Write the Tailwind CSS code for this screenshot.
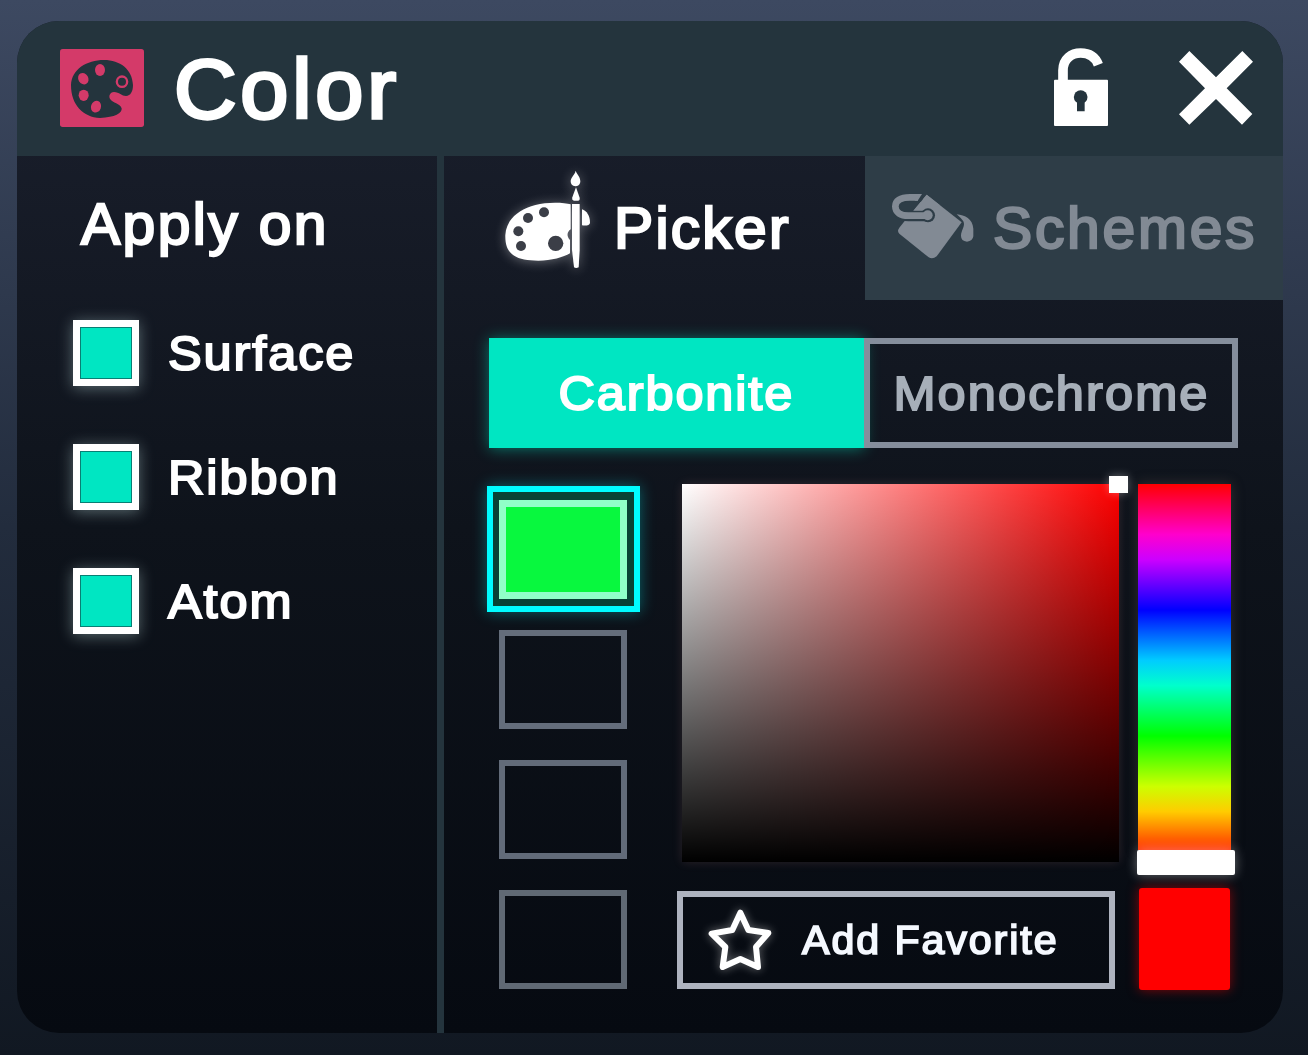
<!DOCTYPE html>
<html lang="en">
<head>
<meta charset="utf-8">
<title>Color</title>
<script src="https://cdn.jsdelivr.net/npm/@tailwindcss/browser@4"></script>
</head>
<body class="h-[1055px] w-[1308px] overflow-hidden bg-linear-to-b/srgb from-[#3d4961] via-[#222c3d] to-[#111822] pt-[21px] pl-[17px] font-['Liberation_Sans',sans-serif] text-white [font-kerning:none]">
<main class="flex h-[1012px] w-[1266px] flex-col overflow-hidden rounded-[42px] bg-linear-to-b/srgb from-[#1b202e] via-[#0e131b] to-[#060a11]">
  <header class="flex h-[135px] shrink-0 items-center bg-[#24343d] pb-[2px] pl-[43px]">
    <svg class="h-[78px] w-[84px] shrink-0" viewBox="60 57 252 234">
      <rect x="60" y="57" width="252" height="234" rx="8" fill="#d43a69"/>
      <path fill="#24343d" d="M93 165C95 118 140 90 192 90C240 90 277 118 279 165C279 185 272 197 258 198C245 198 238 186 222 186C209 187 205 199 211 208C218 219 240 220 245 235C247 250 225 262 180 264C130 262 93 225 93 165Z"/>
      <g fill="#d43a69"><ellipse cx="180" cy="120" rx="15" ry="18"/><ellipse cx="130" cy="146" rx="15" ry="18" transform="rotate(-30 130 146)"/><ellipse cx="131" cy="196" rx="15" ry="17"/><ellipse cx="168" cy="230" rx="15" ry="18" transform="rotate(20 168 230)"/></g>
      <circle cx="246" cy="155" r="15.500" fill="none" stroke="#d43a69" stroke-width="7"/>
    </svg>
    <h1 class="ml-[30px] flex-1 pt-[2px] text-[84px] leading-none"><span class="inline-block origin-left scale-x-103 tracking-[3.700px] [-webkit-text-stroke:3.3px_white]">Color</span></h1>
    <svg class="relative -top-px h-[80px] w-[58px]" viewBox="66 80 174 240">
      <path fill="none" stroke="#fff" stroke-width="29" d="M99 184V150C99 115 125 98 152 98C178 98 196 110 205 133"/>
      <rect x="72" y="178" width="162" height="139" rx="3" fill="#fff"/>
      <circle cx="152" cy="230" r="20.500" fill="#24343d"/><path fill="#24343d" d="M141 240h23v33h-23z"/>
    </svg>
    <svg class="mr-[30px] ml-[69px] h-[74px] w-[74px]" viewBox="447 93 222 222"><path fill="#fff" d="M447 125 478 93 558 172 637 93 669 125 590 205 667 282 636 314 558 237 478 314 447 283 525 205Z"/></svg>
  </header>
  <div class="flex flex-1">
    <aside class="w-[420px] shrink-0 pt-[34px]">
      <h2 class="ml-[64px] h-[68px] text-[57px] leading-[68px]"><span class="inline-block origin-left scale-x-103 tracking-[2.350px] [-webkit-text-stroke:2.3px_white]">Apply on</span></h2>
      <ul class="mt-[62px] ml-[56px] flex flex-col gap-[58px] text-[49px] leading-none tracking-[1.850px] [-webkit-text-stroke:2px_white]">
        <li class="flex h-[66px] items-center gap-[29px]"><span class="size-[66px] border-7 border-white bg-[#00e6c2] shadow-[0_2px_14px_rgba(200,235,235,0.4),inset_0_0_0_1px_#087f74]"></span><span class="origin-left scale-x-103">Surface</span></li>
        <li class="flex h-[66px] items-center gap-[29px]"><span class="size-[66px] border-7 border-white bg-[#00e6c2] shadow-[0_2px_14px_rgba(200,235,235,0.4),inset_0_0_0_1px_#087f74]"></span><span class="origin-left scale-x-103">Ribbon</span></li>
        <li class="flex h-[66px] items-center gap-[29px]"><span class="size-[66px] border-7 border-white bg-[#00e6c2] shadow-[0_2px_14px_rgba(200,235,235,0.4),inset_0_0_0_1px_#087f74]"></span><span class="origin-left scale-x-103">Atom</span></li>
      </ul>
    </aside>
    <div class="w-[7px] shrink-0 bg-[#24343d]"></div>
    <section class="flex w-[839px] flex-col">
      <nav class="flex h-[144px] shrink-0 text-[57px] leading-none">
        <div class="flex w-[421px] items-center pl-[56px] tracking-[2.200px] [-webkit-text-stroke:2.3px_white]">
          <svg class="relative -top-2 h-[104px] w-[94px] shrink-0 overflow-visible drop-shadow-[0_1px_6px_rgba(255,255,255,0.35)]" viewBox="60 24 282 312">
            <g fill="#fff"><path d="M76 225C80 165 140 128 225 128C245 128 262 130 272 133V208C262 215 258 228 270 240V280C250 292 215 302 175 302C110 302 74 285 76 225Z"/>
            <path d="M306 148C320 152 330 168 330 188C330 196 318 198 306 196Z"/>
            <path d="M276 132H299V270L296 322Q288 326 282 322L276 270Z"/>
            <path d="M288 82 299 113Q300 122 294 122H282Q275 122 277 112Z"/>
            <path d="M287 32C291 45 302 50 301 66Q298 79 286 79Q272 78 272 64C272 52 284 46 287 32Z"/></g>
            <g fill="#3b3e47"><circle cx="144" cy="174" r="15"/><circle cx="192" cy="157" r="15"/><circle cx="115" cy="214" r="15"/><circle cx="123" cy="258" r="15"/><circle cx="227" cy="250" r="23"/></g>
          </svg>
          <span class="ml-[19.500px] origin-left scale-x-103">Picker</span>
        </div>
        <div class="flex w-[418px] items-center bg-[#2e3d47] pl-[26px] tracking-[2.700px] text-[#828a94] [-webkit-text-stroke:2.3px_#828a94]">
          <svg class="relative -top-[2px] h-[66px] w-[84px] shrink-0" viewBox="93 128 252 198">
            <path fill="#828a94" d="M200 133 305 216 230 318Q218 328 206 321L118 250Q110 242 118 232L134 212Z"/>
            <path fill="none" stroke="#2e3d47" stroke-width="32" d="M188 138H150C120 138 106 150 106 168C106 188 122 197 145 197H200"/>
            <path fill="#828a94" d="M200 133 240 165 205 178 185 180H162Z"/>
            <circle cx="204" cy="195" r="21" fill="#2e3d47"/>
            <path fill="none" stroke="#828a94" stroke-width="20" d="M174 141H150C120 141 106 152 106 168C106 187 122 196 145 196H203"/>
            <path fill="#828a94" d="M172 131h14l-13 20h-9z"/>
            <circle cx="203" cy="195" r="15" fill="#828a94"/>
            <path fill="#828a94" d="M290 192C315 195 338 205 340 235V258Q338 273 321 274Q303 272 303 257C303 240 317 228 310 213Q302 202 290 192Z"/>
          </svg>
          <span class="ml-[18px] origin-left scale-x-103">Schemes</span>
        </div>
      </nav>
      <div class="mt-[38px] ml-[45px] flex h-[110px] w-[749px] text-[49px] leading-none">
        <div class="flex w-[375px] items-center justify-center bg-[#00e6c2] tracking-[1.800px] shadow-[0_1px_14px_rgba(0,230,194,0.45)] [-webkit-text-stroke:2px_white]"><span class="scale-x-103">Carbonite</span></div>
        <div class="flex w-[374px] items-center justify-center border-6 border-[#858e9c] tracking-[2.100px] text-[#a7afb9] [-webkit-text-stroke:2px_#a7afb9]"><span class="scale-x-103">Monochrome</span></div>
      </div>
      <div class="mt-[36px] ml-[55px] flex">
        <div class="mt-[16px] flex w-[128px] flex-col gap-[31px]">
          <div class="relative h-[99px] border-7 border-[#90ffc8] bg-[#08f83e] shadow-[0_0_0_8px_#084235]">
            <div class="absolute -top-[21px] -right-[20px] -bottom-[20px] -left-[19px] border-6 border-[#00fcff] shadow-[0_0_14px_rgba(0,252,255,0.35)]"></div>
          </div>
          <div class="h-[99px] border-6 border-[#646d7b]"></div>
          <div class="h-[99px] border-6 border-[#626b79]"></div>
          <div class="h-[99px] border-6 border-[#606974]"></div>
        </div>
        <div class="ml-[50px] flex w-[438px] flex-col">
          <div class="relative ml-[5px] h-[378px] w-[437px] bg-linear-to-r/srgb from-white to-[#ff0000] shadow-[0_0_10px_rgba(255,160,160,0.14)]">
            <div class="absolute inset-0 bg-linear-to-b/srgb from-black/0 to-black"></div>
            <div class="absolute -top-[8px] -right-[9px] h-[17px] w-[19px] bg-white shadow-[0_0_10px_rgba(255,255,255,0.35)]"></div>
          </div>
          <button class="mt-[29px] flex h-[98px] items-center border-6 border-[#aeb3bf] pl-[23px] text-[40px] leading-none tracking-[1.850px] text-[#f5f9ff] [-webkit-text-stroke:1.7px_#f5f9ff]">
            <svg class="h-[66px] w-[68px] overflow-visible drop-shadow-[0_0_5px_rgba(255,255,255,0.4)]" viewBox="108 202 204 198"><path fill="none" stroke="#fff" stroke-width="18" stroke-linejoin="round" d="M211 219 235 271 295 280 258 322 264 382 211 358 158 382 166 322 125 282 187 271Z"/></svg>
            <span class="ml-[28px] origin-left scale-x-103">Add Favorite</span>
          </button>
        </div>
        <div class="ml-[22px] flex w-[98px] flex-col">
          <div class="ml-px h-[366px] w-[93px] bg-[linear-gradient(to_bottom,#f00_0px,#f06_25.2px,#f0c_50.4px,#c0f_75.6px,#60f_100.8px,#00f_126px,#06f_151.2px,#0cf_176.4px,#0fc_201.6px,#0f6_226.8px,#0f0_252px,#6f0_277.2px,#cf0_302.4px,#fc0_327.6px,#f60_352.8px,#f00_378px)] shadow-[0_0_12px_rgba(120,100,90,0.35)]"></div>
          <div class="h-[25px] rounded-[2px] bg-white shadow-[0_0_12px_rgba(255,255,255,0.4)]"></div>
          <div class="mt-[13px] ml-[2px] h-[102px] w-[91px] rounded-[3px] bg-[#ff0000] shadow-[0_0_12px_rgba(255,0,0,0.5)]"></div>
        </div>
      </div>
    </section>
  </div>
</main>
</body>
</html>
